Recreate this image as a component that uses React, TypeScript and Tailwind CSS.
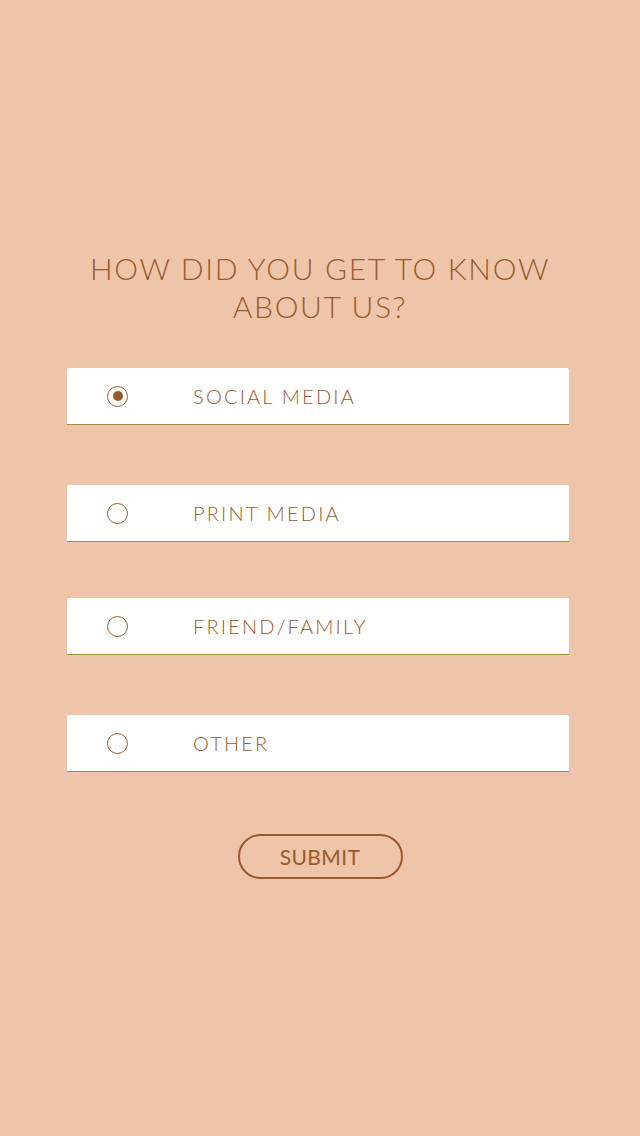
const options = [
  { label: "SOCIAL MEDIA", checked: true, mt: "mt-0" },
  { label: "PRINT MEDIA", checked: false, mt: "mt-[60px]" },
  { label: "FRIEND/FAMILY", checked: false, mt: "mt-[56px]" },
  { label: "OTHER", checked: false, mt: "mt-[60px]" },
];

const Radio = ({ checked }: { checked: boolean }) => (
  <span className="flex h-[21px] w-[21px] items-center justify-center rounded-full border border-[#9a5a2d]">
    {checked && <span className="h-[10px] w-[10px] rounded-full bg-[#9a5a2d]" />}
  </span>
);

export default function App() {
  return (
    <div
      className="flex min-h-[1136px] w-full flex-col items-center bg-[#eec5a9] pt-[249px] text-[#9a5a2d]"
      style={{ fontFamily: "Lato, 'Open Sans', sans-serif" }}
    >
      <h1 className="text-center text-[30px] font-light leading-[38px] tracking-[0.055em]">
        HOW DID YOU GET TO KNOW
        <br />
        ABOUT US?
      </h1>

      <div className="mt-[43px] ml-[-4px] flex w-[502px] flex-col">
        {options.map((o) => (
          <label
            key={o.label}
            className={`${o.mt} flex h-[57px] cursor-pointer items-center rounded-t-[2px] border-b border-[#a68f3a] bg-white pl-[40px]`}
          >
            <Radio checked={o.checked} />
            <span className="ml-[65px] text-[20px] font-light tracking-[0.11em]">
              {o.label}
            </span>
          </label>
        ))}
      </div>

      <button className="mt-[62px] h-[45px] w-[165px] rounded-full border-2 border-[#9a5a2d] text-[21px] font-normal tracking-[0.02em]">
        SUBMIT
      </button>
    </div>
  );
}
